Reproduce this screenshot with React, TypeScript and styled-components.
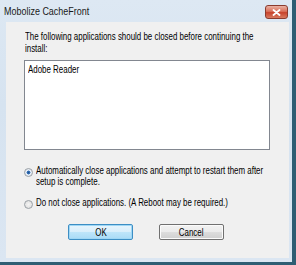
import React from "react";
import styled, { createGlobalStyle } from "styled-components";

const Global = createGlobalStyle`
  html, body { margin: 0; padding: 0; background: #ffffff; }
  body { font-family: "Liberation Sans", Arial, sans-serif; }
`;

const Window = styled.div`
  width: 296px;
  height: 265px;
  box-sizing: border-box;
  display: flex;
  flex-direction: column;
  background: linear-gradient(180deg, #dde8f3 0%, #d6e3f0 40%, #dbe6f2 100%);
  border-right: 4px solid #2e5d73;
  border-bottom: 3px solid #2e5d73;
  overflow: hidden;
`;

const TitleBar = styled.div`
  height: 22px;
  display: flex;
  align-items: center;
  justify-content: space-between;
  padding: 0 4px 0 4px;
  flex: none;
`;

/* The reference screenshot is horizontally compressed; text is squeezed to match */
const Squeeze = styled.span<{ $x?: number }>`
  display: inline-block;
  transform: scaleX(${(p) => p.$x ?? 0.72});
  transform-origin: left center;
  white-space: nowrap;
`;

const Title = styled(Squeeze)`
  font-size: 11.5px;
  color: #1a1a1a;
`;

const CloseButton = styled.div`
  width: 21px;
  height: 12px;
  margin-top: 2px;
  border: 1px solid #8a3b2e;
  border-radius: 3px;
  background: linear-gradient(180deg, #eab2a4 0%, #d9705a 45%, #c7432c 55%, #d87a60 100%);
  display: flex;
  align-items: center;
  justify-content: center;
`;

const Client = styled.div`
  flex: 1;
  margin: 0 3px 4px 6px;
  background: #f0f0f0;
  display: flex;
  flex-direction: column;
  font-size: 11px;
  color: #000;
  overflow: hidden;
`;

const Message = styled.p`
  margin: 8px 0 0 19px;
  line-height: 12px;
`;

const ListBox = styled.div`
  margin: 6px 0 0 18px;
  width: 246px;
  height: 90px;
  box-sizing: border-box;
  background: #fff;
  border: 1px solid #828790;
  padding: 2px 3px;
  overflow: hidden;
`;

const ListItem = styled.div`
  line-height: 12px;
`;

const RadioRow = styled.label<{ $top: number }>`
  display: flex;
  align-items: flex-start;
  margin: ${(p) => p.$top}px 0 0 18px;
  line-height: 11px;
`;

const RadioCircle = styled.span<{ $checked?: boolean }>`
  flex: none;
  width: 9px;
  height: 9px;
  border-radius: 50%;
  box-sizing: border-box;
  margin: 3px 3px 0 0;
  border: 1px solid #9aa0a6;
  background: ${(p) =>
    p.$checked
      ? "radial-gradient(circle, #1f4f8a 0%, #3a78c0 35%, #e7eef6 45%, #dfe3e8 100%)"
      : "radial-gradient(circle, #f4f4f4 0%, #dadada 100%)"};
`;

const ButtonRow = styled.div`
  display: flex;
  gap: 26px;
  margin: 15px 0 0 62px;
`;

const Button = styled.div<{ $default?: boolean }>`
  width: 65px;
  height: 16px;
  box-sizing: border-box;
  border-radius: 2px;
  display: flex;
  align-items: center;
  justify-content: center;
  font-size: 11px;
  border: 1px solid ${(p) => (p.$default ? "#3d8ec4" : "#707070")};
  background: ${(p) =>
    p.$default
      ? "linear-gradient(180deg, #e8f5fd 0%, #d8eefb 50%, #bee5fa 51%, #a9dbf6 100%)"
      : "linear-gradient(180deg, #f2f2f2 0%, #ebebeb 50%, #dddddd 51%, #cfcfcf 100%)"};
  box-shadow: ${(p) => (p.$default ? "inset 0 0 0 1px #9fd7f5" : "inset 0 0 0 1px #fbfbfb")};
`;

const ButtonLabel = styled(Squeeze)`
  transform-origin: center center;
`;

export default function App() {
  return (
    <>
      <Global />
      <Window>
        <TitleBar>
          <Title $x={0.78}>Mobolize CacheFront</Title>
          <CloseButton>
            <svg width="9" height="7" viewBox="0 0 9 7">
              <path d="M1.5 1 L7.5 6 M7.5 1 L1.5 6" stroke="#ffffff" strokeWidth="1.8" strokeLinecap="round" />
            </svg>
          </CloseButton>
        </TitleBar>
        <Client>
          <Message>
            <Squeeze>
              The following applications should be closed before continuing the
              <br />
              install:
            </Squeeze>
          </Message>
          <ListBox>
            <ListItem>
              <Squeeze>Adobe Reader</Squeeze>
            </ListItem>
          </ListBox>
          <RadioRow $top={15}>
            <RadioCircle $checked />
            <Squeeze>
              Automatically close applications and attempt to restart them after
              <br />
              setup is complete.
            </Squeeze>
          </RadioRow>
          <RadioRow $top={10}>
            <RadioCircle />
            <Squeeze>Do not close applications. (A Reboot may be required.)</Squeeze>
          </RadioRow>
          <ButtonRow>
            <Button $default>
              <ButtonLabel>OK</ButtonLabel>
            </Button>
            <Button>
              <ButtonLabel>Cancel</ButtonLabel>
            </Button>
          </ButtonRow>
        </Client>
      </Window>
    </>
  );
}
